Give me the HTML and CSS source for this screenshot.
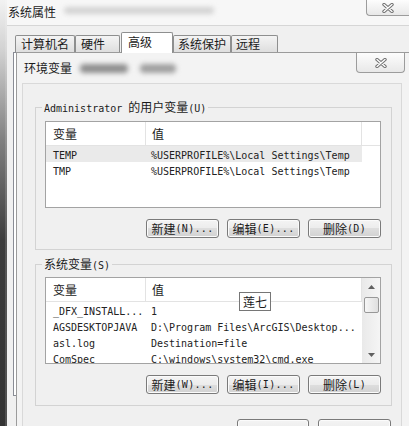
FILE: index.html
```html
<!DOCTYPE html>
<html lang="zh">
<head>
<meta charset="utf-8">
<title>环境变量</title>
<link rel="stylesheet" href="styles.css">
</head>
<body>
<div class="screen">
  <div class="edge"></div>
  <div class="win">
    <div class="titlebar">
      <span class="title">系统属性</span>
      <span class="blur blur-top"></span>
      <button class="close close-outer" aria-label="关闭">
        <svg width="12" height="10" viewBox="0 0 12 10"><path d="M2 1.5 L10 8.5 M10 1.5 L2 8.5" stroke="#707070" stroke-width="3.4" stroke-linecap="round" fill="none"/><path d="M2 1.5 L10 8.5 M10 1.5 L2 8.5" stroke="#fff" stroke-width="1.4" stroke-linecap="round" fill="none"/></svg>
      </button>
    </div>
    <div class="client">
      <div class="tabs">
        <div class="tab t1">计算机名</div>
        <div class="tab t2">硬件</div>
        <div class="tab t3 active">高级</div>
        <div class="tab t4">系统保护</div>
        <div class="tab t5">远程</div>
      </div>
      <div class="panel"></div>
    </div>
  </div>

  <div class="dialog">
    <div class="dlg-title">
      <span class="title">环境变量</span>
      <span class="blur blur-a"></span>
      <span class="blur blur-b"></span>
      <button class="close close-inner" aria-label="关闭">
        <svg width="12" height="10" viewBox="0 0 12 10"><path d="M2 1.5 L10 8.5 M10 1.5 L2 8.5" stroke="#707070" stroke-width="3.4" stroke-linecap="round" fill="none"/><path d="M2 1.5 L10 8.5 M10 1.5 L2 8.5" stroke="#fff" stroke-width="1.4" stroke-linecap="round" fill="none"/></svg>
      </button>
    </div>
    <div class="dlg-client">
      <fieldset class="group g1">
        <legend><span class="mono">Administrator&nbsp;</span>的用户变量<span class="mono">(U)</span></legend>
        <div class="list">
          <div class="lhead"><span class="c1">变量</span><span class="c2">值</span><span class="c3"></span></div>
          <div class="row sel"><span class="c1">TEMP</span><span class="c2">%USERPROFILE%\Local Settings\Temp</span></div>
          <div class="row"><span class="c1">TMP</span><span class="c2">%USERPROFILE%\Local Settings\Temp</span></div>
        </div>
        <div class="btns">
          <button class="btn">新建<span class="mono">(N)...</span></button>
          <button class="btn">编辑<span class="mono">(E)...</span></button>
          <button class="btn">删除<span class="mono">(D)</span></button>
        </div>
      </fieldset>

      <fieldset class="group g2">
        <legend>系统变量<span class="mono">(S)</span></legend>
        <div class="list split">
          <div class="lbody">
            <div class="lhead"><span class="c1">变量</span><span class="c2">值</span></div>
            <div class="row"><span class="c1">_DFX_INSTALL...</span><span class="c2">1</span></div>
            <div class="row"><span class="c1">AGSDESKTOPJAVA</span><span class="c2">D:\Program Files\ArcGIS\Desktop...</span></div>
            <div class="row"><span class="c1">asl.log</span><span class="c2">Destination=file</span></div>
            <div class="row"><span class="c1">ComSpec</span><span class="c2">C:\windows\system32\cmd.exe</span></div>
          </div>
          <div class="vscroll">
            <div class="arrow"><svg width="7" height="4" viewBox="0 0 7 4"><path d="M0 4 L3.5 0 L7 4 Z" fill="#606060"/></svg></div>
            <div class="thumb"></div>
            <div class="spacer"></div>
            <div class="arrow"><svg width="7" height="4" viewBox="0 0 7 4"><path d="M0 0 L3.5 4 L7 0 Z" fill="#606060"/></svg></div>
          </div>
          <div class="tooltip">莲七</div>
        </div>
        <div class="btns">
          <button class="btn">新建<span class="mono">(W)...</span></button>
          <button class="btn">编辑<span class="mono">(I)...</span></button>
          <button class="btn">删除<span class="mono">(L)</span></button>
        </div>
      </fieldset>

      <div class="btns dlg-btns">
        <button class="btn b-ok" aria-label="确定"></button>
        <button class="btn b-cancel" aria-label="取消"></button>
      </div>
    </div>
  </div>
</div>
</body>
</html>
```

FILE: styles.css
```css
* { box-sizing: border-box; }
html, body { margin: 0; padding: 0; }
body {
  width: 409px;
  height: 426px;
  overflow: hidden;
  background: #f0f0f0;
  font-family: "Noto Sans CJK SC", sans-serif;
  font-size: 12px;
  color: #1b1b1b;
}
.mono { font-family: "DejaVu Sans Mono", monospace; font-size: 10px; }

.screen { position: relative; display: flex; width: 409px; height: 426px; }

.edge {
  width: 7px;
  flex: none;
  background: linear-gradient(#f2f2f2 0, #d2d2d2 50px, #808080 140px, #3c3c3c 240px, #333 426px);
  box-shadow: inset -2px 0 0 rgba(255,255,255,0.14);
}

.win { flex: 1; min-width: 0; display: flex; flex-direction: column; }

.titlebar {
  height: 25px;
  display: flex;
  align-items: flex-start;
  background: #f7f7f7;
  padding-left: 1px;
}
.title { line-height: 24px; white-space: nowrap; }

.blur { display: inline-block; border-radius: 4px; filter: blur(2.5px); }
.blur-top { margin: 7px 0 0 8px; width: 150px; height: 7px; background: #d2d2d2; }

.close {
  display: flex;
  align-items: center;
  justify-content: center;
  padding: 0;
  margin: 0;
  border: 1px solid #9c9c9c;
  background: linear-gradient(#fdfdfd, #e8e8e8);
}
.close-outer {
  margin-left: auto;
  width: 43px;
  height: 16px;
  border-top: none;
  border-right: none;
  border-radius: 0 0 0 4px;
}

.client {
  flex: 1;
  background: #f0f0f0;
  border-top: 1px solid #d6d6d6;
  padding: 6px 0 0 6px;
}
.tabs {
  display: flex;
  align-items: flex-end;
  height: 20px;
  margin-left: 2px;
  position: relative;
  z-index: 1;
}
.tab {
  height: 17px;
  border: 1px solid #8e8f8f;
  border-bottom: none;
  border-radius: 2px 2px 0 0;
  background: linear-gradient(#f4f4f4, #dedede);
  padding-left: 4px;
  line-height: 16px;
  white-space: nowrap;
}
.t1 { width: 60px; padding-left: 5px; }
.t2 { width: 45px; padding-left: 5px; }
.t3 { width: 52px; margin-left: 1px; padding-left: 6px; }
.t4 { width: 58px; }
.t5 { width: 47px; }
.tab.active {
  height: 21px;
  margin-bottom: -1px;
  background: #fff;
  line-height: 18px;
}
.panel {
  height: 344px;
  margin-right: 6px;
  border: 1px solid #898c95;
  background: #fff;
}

/* inner dialog window overlapping the system properties window */
.dialog {
  position: absolute;
  left: 16px;
  top: 52px;
  width: 394px;
  height: 380px;
  border-left: 1px solid #9b9b9b;
  border-top: 1px solid #9b9b9b;
  background: #f3f3f3;
}
.dlg-title {
  height: 30px;
  display: flex;
  align-items: flex-start;
  padding-left: 7px;
}
.dlg-title .title { line-height: 30px; }
.blur-a { margin: 11px 0 0 8px; width: 48px; height: 9px; background: #8f8f8f; }
.blur-b { margin: 11px 0 0 12px; width: 36px; height: 9px; background: #a0a0a0; }
.close-inner {
  margin-left: auto;
  margin-right: 5px;
  width: 49px;
  height: 20px;
  border-top: none;
  border-radius: 0 0 4px 4px;
}

.dlg-client {
  margin: 0 8px 0 5px;
  height: 360px;
  border-left: 1px solid #d9d9d9;
  border-top: 1px solid #d9d9d9;
  border-right: 1px solid #d9d9d9;
  background: #f0f0f0;
}

.group {
  margin: 16px 9px 0 12px;
  border: 1px solid #d3d3d3;
  padding: 7px 10px 11px 9px;
  min-inline-size: 0;
}
.g2 { margin-top: 7px; padding-top: 6px; }
.group legend {
  display: flex;
  align-items: baseline;
  height: 14px;
  line-height: 14px;
  padding: 0 2px;
  margin-left: -3px;
  white-space: nowrap;
}

.list {
  position: relative;
  height: 87px;
  border: 1px solid #a3a3a3;
  background: #fff;
  overflow: hidden;
}
.list.split { display: flex; }
.lbody { flex: 1; min-width: 0; }
.lhead {
  display: flex;
  height: 24px;
  border-bottom: 1px solid #e3e3e3;
}
.lhead span { line-height: 23px; }
.lhead .c1 { width: 100px; padding-left: 7px; border-right: 1px solid #e3e3e3; }
.lhead .c2 { width: 216px; padding-left: 6px; border-right: 1px solid #e3e3e3; }
.lhead .c3 { flex: 1; }

.row {
  display: flex;
  width: 316px;
  height: 16px;
  padding-top: 4px;
  line-height: 12px;
  font-family: "DejaVu Sans Mono", monospace;
  font-size: 10px;
  color: #222;
  white-space: nowrap;
}
.row .c1 { width: 100px; padding-left: 7px; }
.row .c2 { width: 216px; padding-left: 5px; }
.row.sel { background: #eaeaea; }

.vscroll {
  width: 18px;
  flex: none;
  display: flex;
  flex-direction: column;
  align-items: center;
  background: linear-gradient(90deg, #e9e9e9, #f5f5f5);
}
.arrow {
  width: 100%;
  height: 17px;
  display: flex;
  align-items: center;
  justify-content: center;
}
.thumb {
  width: 15px;
  height: 16px;
  margin-top: 2px;
  border: 1px solid #989898;
  border-radius: 2px;
  background: linear-gradient(90deg, #f6f6f6, #dfdfdf);
}
.spacer { flex: 1; }

.tooltip {
  position: absolute;
  left: 193px;
  top: 14px;
  width: 32px;
  height: 19px;
  border: 1px solid #767676;
  background: #fff;
  line-height: 17px;
  text-align: center;
}

.btns {
  display: flex;
  justify-content: flex-end;
  gap: 8px;
  margin-top: 11px;
}
.btn {
  width: 73px;
  height: 19px;
  padding: 0;
  border: 1px solid #7a7a7a;
  border-radius: 3px;
  background: linear-gradient(#f4f4f4 0, #ececec 50%, #dedede 50%, #d2d2d2 100%);
  box-shadow: inset 0 0 0 1px #fbfbfb;
  font-family: "Noto Sans CJK SC", sans-serif;
  font-size: 12px;
  color: #1b1b1b;
  display: flex;
  align-items: center;
  justify-content: center;
  white-space: nowrap;
}
.btn .mono { letter-spacing: 0.3px; }
.dlg-btns { margin: 13px 10px 0 0; gap: 9px; }
.dlg-btns .btn { height: 23px; }
.b-ok { width: 72px; }
.b-cancel { width: 73px; }
```
